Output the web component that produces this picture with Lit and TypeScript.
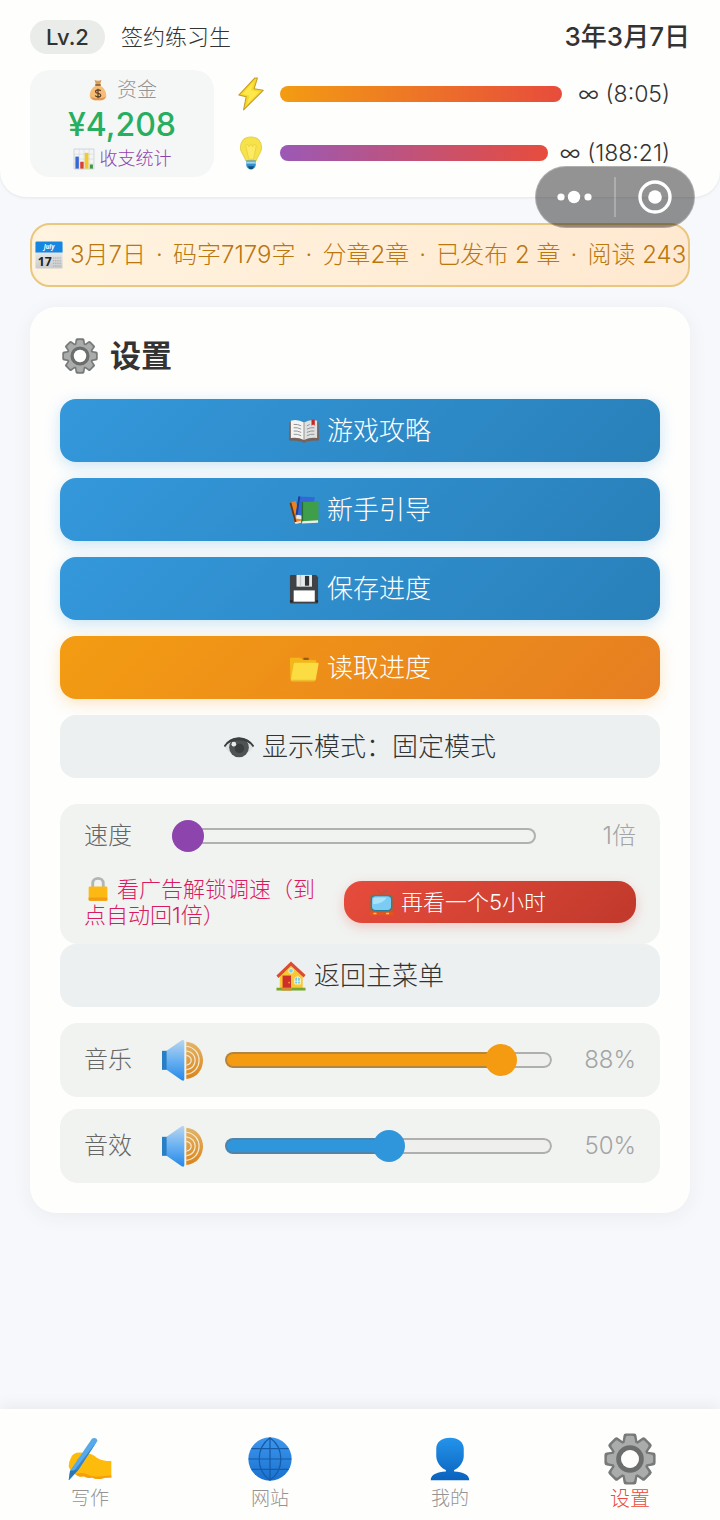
import { LitElement, html, svg, css } from "lit";
import { customElement, state } from "lit/decorators.js";

const gearBody = (r: number, w: number, top: number, fill: string) => svg`
  <g fill=${fill} transform="translate(32 32)">
    <circle r=${r}></circle>
    ${[0, 45, 90, 135, 180, 225, 270, 315].map(
      (a) => svg`<path transform="rotate(${a})" d="M${-w - 2} -16 L${-w} ${-top + 3} Q${-w} ${-top} ${-w + 3} ${-top} H${w - 3} Q${w} ${-top} ${w} ${-top + 3} L${w + 2} -16Z"></path>`
    )}
  </g>`;

const icons = {
  gear: svg`
    <mask id="gear-hole"><path fill="#fff" d="M0 0h64v64H0z"></path><circle cx="32" cy="32" r="11" fill="#000"></circle></mask>
    <g mask="url(#gear-hole)">
      ${gearBody(24, 8, 31.5, "#777a79")}
      ${gearBody(21, 5.5, 28.5, "#a9acaa")}
      <circle cx="32" cy="32" r="14" fill="none" stroke="#6b6e6d" stroke-width="6"></circle>
    </g>`,
  pouch: svg`
    <path d="M22 3q10 4 20 0l-4 14H26z" fill="#d9a05a"></path>
    <path d="M26 19C14 25 7 39 8 50c1 9 10 12 24 12s23-3 24-12c1-11-6-25-18-31z" fill="#f6bd78"></path>
    <path d="M12 51c4 7 36 7 42-1-1 9-8 12-22 12S13 60 12 51z" fill="#e3974d"></path>
    <path d="M24 15h16v5H24z" fill="#8a6238"></path>
    <path d="M40 35c-2-4-15-5-15 2 0 7 15 3 15 10 0 7-14 6-16 1M32 28v28" fill="none" stroke="#5c3d22" stroke-width="3.5"></path>`,
  chart: svg`
    <path d="M3 3h58v58H3z" fill="#f2f4f5" stroke="#c3c9cd" stroke-width="2"></path>
    <path d="M3 18h58M3 32h58M3 46h58M18 3v58M32 3v58M47 3v58" stroke="#cfd5d9" stroke-width="1.5"></path>
    <path d="M7 25h10v35H7z" fill="#3567d6"></path><path d="M21 40h10v20H21z" fill="#dc3f33"></path>
    <path d="M34 14h11v46H34z" fill="#f2c92f"></path><path d="M49 48h9v12h-9z" fill="#3a9b45"></path>`,
  bolt: svg`
    <path d="M39 2 9 34l14 3-5 25 37-37-17-3 6-20z" fill="#f5d92e" stroke="#c79b24" stroke-width="2" stroke-linejoin="round"></path>
    <path d="M37 9 16 32l13 3-4 16 22-23-15-3z" fill="#ffe84c"></path>`,
  bulb: svg`
    <path d="M32 2C19 2 12 11 12 22c0 10 8 15 10 24h20c2-9 10-14 10-24C52 11 45 2 32 2z" fill="#f6e34a" stroke="#e8cf55" stroke-width="2"></path>
    <path d="M22 18q5-5 6 2 4-8 7 0 2-7 7-2L37 44h-9z" fill="#fbea62" stroke="#e9cd42" stroke-width="1.5"></path>
    <path d="M23 46h18v8c0 4-4 9-9 9s-9-5-9-9z" fill="#2f91cf"></path>
    <path d="M23 48h18v4H23z" fill="#9ed7f3"></path><path d="M26 57h12l-3 5h-6z" fill="#174f73"></path>`,
  calendar: svg`
    <defs><linearGradient id="cal" x2="0" y2="1"><stop stop-color="#fafafa"></stop><stop offset="1" stop-color="#c9cbcc"></stop></linearGradient></defs>
    <path d="M1 4q0-3 3-3h56q3 0 3 3v56q0 3-3 3H4q-3 0-3-3z" fill="url(#cal)"></path>
    <path d="M1 4q0-3 3-3h56q3 0 3 3v22H1z" fill="#1786e0"></path>
    <text x="32" y="19" text-anchor="middle" font-family="Open Sans, sans-serif" font-size="14" font-weight="700" font-style="italic" fill="#fff">July</text>
    <text x="6" y="57" font-family="Open Sans, sans-serif" font-size="28" font-weight="700" fill="#222">17</text>
    <path d="M41 39h19M41 45h19M41 51h19M41 57h19" stroke="#a3a6a7" stroke-width="2.5" stroke-dasharray="3 2"></path>`,
  book: svg`
    <path d="M1 13q16-5 31 2 15-7 31-2l1 39q-17 0-28 3-4 4-8 0-11-3-28-3z" fill="#76625a"></path>
    <path d="M4 10q15-4 28 4v37q-12-6-28-4z" fill="#f3f3f1"></path><path d="M60 10q-15-4-28 4v37q12-6 28-4z" fill="#dfe0df"></path>
    <path d="M32 14v37" stroke="#8e8d8b" stroke-width="2"></path>
    <path d="M10 18q8-1 16 3M10 25q8-1 16 3M10 32q8-1 16 3M10 39q8-1 16 3M54 25q-8-1-16 3M54 32q-8-1-16 3M54 39q-8-1-16 3M44 18l-6 3" fill="none" stroke="#8b9093" stroke-width="2"></path>
    <path d="M48 8h7v13l-3.500-3-3.500 3z" fill="#c62828"></path>`,
  books: svg`
    <path d="m1 17 13-4 13 44-14 4z" fill="#ef8120"></path><path d="m1 17 4-1 12 45h-4z" fill="#5c3821"></path>
    <path d="m20 3 35 2-6 40-34-3z" fill="#3167d8"></path><path d="m20 3 4 0-6 42-4-2z" fill="#1c3f92"></path>
    <path d="m16 42 16 3v8l-17-3z" fill="#e7ece9"></path>
    <path d="m27 15 36-1v43l-36 2z" fill="#3e9e49"></path><path d="M27 15h3v44h-3z" fill="#226b33"></path>
    <path d="m28 56 34-2v5l-34 2z" fill="#e9efe9"></path><path d="m12 58 13-3 1 4-12 3z" fill="#f5e4cf"></path>`,
  floppy: svg`
    <path d="M4 2h54l4 5v54q0 2-2 2H4q-2 0-2-2V4q0-2 2-2z" fill="#3f4347"></path>
    <path d="M16 2h33v25H16z" fill="#e7e9ea"></path><path d="M34 4h9v21h-9z" fill="#303336"></path><path d="M23 2h3v25h-3z" fill="#c5c8c9"></path>
    <path d="M10 35h45v24H10z" fill="#fff"></path><path d="M2 56h6v4H2zM57 56h5v4h-5z" fill="#24272a"></path>`,
  folder: svg`
    <path d="M2 12q0-2 2-2h20l6 5h26q2 0 2 2v10L8 56H3z" fill="#f3b71c"></path>
    <path d="M31 10h11v5H31z" fill="#985d1a"></path>
    <path d="M10 24q0-3 3-3h48q3 0 2 3l-6 33q-1 3-4 3H6q-3 0-2-3z" fill="#fbdc42"></path><path d="M4 57q0 3 2 3h47q3 0 4-3z" fill="#edbd2d"></path>`,
  eye: svg`
    <path d="M1 31C15 5 48 5 63 31 49 57 15 57 1 31z" fill="#dfe3e3"></path>
    <path d="M1 31C15 8 48 8 63 31" fill="none" stroke="#3d4041" stroke-width="4"></path>
    <circle cx="32" cy="33" r="21" fill="#505354"></circle><circle cx="33" cy="35" r="10" fill="#3b3e3f"></circle><circle cx="21" cy="26" r="5" fill="#e9ecec"></circle>
    <path d="M2 30C14 6 49 5 62 30 48 14 16 14 2 30z" fill="#3d4041"></path>`,
  house: svg`
    <path d="M8 28 32 7l25 21v31H8z" fill="#f9c834"></path>
    <path d="m32 1 31 29-4 5L32 10 5 36l-4-5z" fill="#d94b35"></path>
    <path d="M14 31h18v27H14z" fill="#cf2f2b"></path><circle cx="28" cy="46" r="2" fill="#f4a52a"></circle>
    <circle cx="32" cy="21" r="5" fill="#79d0f3" stroke="#fff4c4" stroke-width="2"></circle>
    <path d="M40 49V37q6-7 12 0v12z" fill="#6fcbf1" stroke="#fff4c4" stroke-width="2"></path><path d="M46 34v15M39 43h14" stroke="#fff4c4" stroke-width="2"></path>
    <path d="M1 57h62v6H1z" fill="#78a72e"></path><path d="M12 57h22v6H12z" fill="#d38e2f"></path>`,
  tv: svg`
    <path d="m22 1 9 12L46 2" fill="none" stroke="#8c5f66" stroke-width="2"></path>
    <path d="M6 50h52l3 12H3z" fill="#e8521d"></path>
    <path d="M14 13h36q11 0 11 11v20q0 11-11 11H14Q3 55 3 44V24q0-11 11-11z" fill="#a9603f"></path>
    <path d="M18 16h28q10 0 10 10v15q0 10-10 10H18Q8 51 8 41V26q0-10 10-10z" fill="#7bccf2" stroke="#2d7c97" stroke-width="2.500"></path>
    <path d="M18 20h26q-6 14-32 16V26q0-6 6-6z" fill="#aae2fa"></path>
    <path d="M13 58h7M43 58h7" stroke="#fbd04f" stroke-width="4"></path>`,
  lock: svg`
    <path d="M19 30V18C19 2 45 2 45 18v12" fill="none" stroke="#b2b5b5" stroke-width="7"></path>
    <path d="M9 29q0-3 3-3h40q3 0 3 3v29q0 3-3 3H12q-3 0-3-3z" fill="#fdb913"></path><path d="M9 53h46v5q0 3-3 3H12q-3 0-3-3z" fill="#f19c12"></path>`,
  speaker: svg`
    <defs>
      <linearGradient id="cone" x2="0" y2="1"><stop stop-color="#b8d5ef"></stop><stop offset=".5" stop-color="#69b1f1"></stop><stop offset="1" stop-color="#2588e8"></stop></linearGradient>
      <linearGradient id="wave" x2="0" y2="1"><stop stop-color="#e2b568"></stop><stop offset="1" stop-color="#dc8419"></stop></linearGradient>
    </defs>
    <path d="M0 18h9v29H0z" fill="#287fc4"></path>
    <path d="M7 18 30 2q4-2 4 2v57q0 4-4 2L7 47z" fill="url(#cone)"></path>
    <path d="M37 4c34 3 34 54 0 57z" fill="url(#wave)"></path>
    <path d="M37 11c26 3 26 40 0 43M37 18c18 2 18 27 0 29M37 25c10 2 10 13 0 15" fill="none" stroke="#f6ead4" stroke-width="1.8"></path>`,
  writing: svg`
    <path d="M4 31Q7 21 22 23q12 0 20 7 7 5 21 5v24q-10 0-16 2-6 1-12-2-6 2-12-2-8 2-12-2Q2 48 1 43q0-7 3-12z" fill="#fdbb0b"></path>
    <path d="M11 53q10-2 17 1 8 5 19 3l16-1v3q-10 0-16 2-6 1-12-2-6 2-12-2-8 2-12-4z" fill="#f59f0c"></path>
    <path d="M9 44q7-9 14-8M13 34l8-4" fill="none" stroke="#e99a08" stroke-width="2"></path>
    <path d="M35 2q6-2 8 3L15 48 1 63 3 49z" fill="#57a9e8"></path>
    <path d="m43 5-28 43L1 63l4-9z" fill="#3785c6"></path><path d="m3 49 11-1L1 63z" fill="#2b75b5"></path>`,
  globe: svg`
    <defs><linearGradient id="globe" x2="0" y2="1"><stop stop-color="#3d97ee"></stop><stop offset="1" stop-color="#1971ce"></stop></linearGradient></defs>
    <circle cx="32" cy="32" r="31.5" fill="url(#globe)"></circle>
    <path d="M5 17h54M1 32h62M5 47h54M32 1v62M32 1c-21 15-21 47 0 62M32 1c21 15 21 47 0 62" fill="none" stroke="#165ba8" stroke-width="1.8"></path>`,
  person: svg`
    <defs><linearGradient id="person" x2="0" y2="1"><stop stop-color="#2494eb"></stop><stop offset="1" stop-color="#0a62bd"></stop></linearGradient></defs>
    <path d="M32 1C20 1 12 7 12 17v11c0 9 8 18 14 20v2C13 51 4 54 4 63h56c0-9-9-12-22-13v-2c6-2 14-11 14-20V17C52 7 44 1 32 1z" fill="url(#person)"></path>`,
};

type IconName = keyof typeof icons;
type ActionTone = "primary" | "warm" | "plain";

const icon = (name: IconName, cls = "icon") =>
  html`<svg class=${cls} viewBox="0 0 64 64" aria-hidden="true">${icons[name]}</svg>`;

@customElement("app-root")
export class AppRoot extends LitElement {
  @state() private speed = 1;
  @state() private music = 88;
  @state() private effects = 50;

  private actions: { icon: IconName; label: string; tone: ActionTone }[] = [
    { icon: "book", label: "游戏攻略", tone: "primary" },
    { icon: "books", label: "新手引导", tone: "primary" },
    { icon: "floppy", label: "保存进度", tone: "primary" },
    { icon: "folder", label: "读取进度", tone: "warm" },
    { icon: "eye", label: "显示模式：固定模式", tone: "plain" },
  ];

  private news = ["3月7日", "码字7179字", "分章2章", "已发布 2 章", "阅读 243"];

  private tabs: { icon: IconName; label: string }[] = [
    { icon: "writing", label: "写作" },
    { icon: "globe", label: "网站" },
    { icon: "person", label: "我的" },
    { icon: "gear", label: "设置" },
  ];

  static styles = css`
    :host {
      display: flex;
      flex-direction: column;
      position: relative;
      min-height: 100vh;
      background: #f7f8fb;
      color: #333;
      font-family: Inter, "Noto Sans CJK SC", sans-serif;
      font-weight: 300;
      font-size: 24px;
      line-height: 32px;
    }
    *, *::before { box-sizing: border-box; }
    h1, p, ul { margin: 0; padding: 0; }
    button, input { font: inherit; color: inherit; margin: 0; }
    button { border: 0; cursor: pointer; }
    svg { display: block; flex: none; }

    .header {
      display: grid;
      gap: 16px;
      padding: 20px 30px;
      background: #fefefd;
      border-radius: 0 0 26px 26px;
      box-shadow: 0 1px 3px rgba(0, 0, 0, 0.08);
    }
    .identity { display: flex; align-items: center; gap: 16px; height: 34px; }
    .level { padding: 0 16px; border-radius: 17px; background: #eaecea; font-size: 22px; font-weight: 500; line-height: 34px; }
    .rank { font-size: 22px; }
    .date { margin-left: auto; font-size: 26px; font-weight: 500; }
    .stats { display: flex; gap: 20px; }
    .funds { flex: none; display: grid; justify-items: center; width: 184px; padding: 7px 0 5px; border-radius: 20px; background: #f5f7f6; }
    .funds .icon { width: 22px; height: 22px; }
    .funds-label { display: flex; align-items: center; gap: 8px; font-size: 20px; line-height: 26px; color: #959595; }
    .money { font-size: 32px; font-weight: 500; line-height: 43px; color: #27ae60; }
    .ledger { display: flex; align-items: center; gap: 5px; padding: 0; background: none; font-size: 18px; line-height: 26px; color: #8e44ad; }
    .meters { flex: 1; display: grid; align-content: center; gap: 25px; padding-right: 20px; }
    .meter { display: flex; align-items: center; gap: 12px; height: 34px; }
    .meter .icon { width: 34px; height: 34px; }
    .bar { flex: 1; height: 16px; border-radius: 8px; background: linear-gradient(90deg, #f39c12, #e74c3c); }
    .bar.idea { background: linear-gradient(90deg, #9b59b6, #e74c3c); }
    .remaining { min-width: 96px; font-size: 23px; text-align: right; }

    .capsule { position: absolute; top: 166px; right: 25px; display: flex; align-items: center; width: 160px; height: 62px; border: 1px solid rgba(255, 255, 255, 0.25); border-radius: 31px; background: rgba(0, 0, 0, 0.42); }
    .capsule button { flex: 1; display: grid; place-items: center; padding: 0; background: none; }
    .capsule button + button { border-left: 2px solid rgba(255, 255, 255, 0.25); height: 40px; }

    .main { display: grid; gap: 20px; padding: 26px 30px; }
    .ticker { display: flex; align-items: center; gap: 7px; height: 64px; padding: 0 3px; overflow: hidden; white-space: nowrap; border: 2px solid #eac77e; border-radius: 20px; background: linear-gradient(135deg, #fff4e0, #ffe8d0); color: #b9770e; }
    .ticker .icon { width: 28px; height: 30px; }
    .ticker ul { display: flex; list-style: none; }
    .ticker li + li::before { content: "·"; display: inline-block; width: 27px; text-align: center; }

    .card { display: grid; padding: 30px; border-radius: 26px; background: #fefefd; box-shadow: 0 4px 20px rgba(40, 50, 90, 0.06); }
    .title { display: flex; align-items: center; gap: 12px; height: 38px; padding-left: 2px; margin-bottom: 24px; font-size: 31px; font-weight: 700; }
    .title .icon { width: 36px; height: 36px; }
    .actions { display: grid; gap: 16px; margin-bottom: 26px; }
    .action { display: flex; align-items: center; justify-content: center; gap: 8px; width: 100%; height: 63px; padding: 0; border-radius: 16px; font-size: 26px; }
    .action .icon { width: 30px; height: 30px; }
    .primary { color: #fff; background: linear-gradient(135deg, #3498db, #2980b9); box-shadow: 0 4px 15px rgba(52, 152, 219, 0.25); }
    .warm { color: #fff; background: linear-gradient(135deg, #f39c12, #e67e22); box-shadow: 0 4px 15px rgba(243, 156, 18, 0.25); }
    .plain { color: #333; background: #ecf0f0; }

    .panel { display: grid; gap: 24px; padding: 16px 24px; border-radius: 18px; background: #f1f3f1; }
    .setting { display: flex; align-items: center; color: #666; }
    .setting label { flex: none; width: 48px; }
    .setting output { flex: none; width: 84px; text-align: right; color: #a4a4a4; }
    .setting .icon { width: 42px; height: 42px; margin: 0 21px 0 30px; }
    .setting.speed input { margin-left: 40px; }
    .setting.speed output { width: 100px; }
    .unlock { display: flex; align-items: center; gap: 16px; font-size: 22px; line-height: 26px; }
    .hint { flex: 1; color: #d81b60; }
    .hint .icon { display: inline-block; width: 28px; height: 26px; margin-right: 5px; vertical-align: -5px; }
    .watch { flex: none; display: flex; align-items: center; gap: 6px; width: 292px; height: 42px; padding: 0 24px; border-radius: 18px; color: #fff; background: linear-gradient(135deg, #e74c3c, #c0392b); box-shadow: 0 4px 12px rgba(231, 76, 60, 0.25); }
    .watch .icon { width: 27px; height: 27px; }
    .volumes { display: grid; gap: 12px; margin-top: 16px; }

    input[type="range"] {
      --fill: transparent;
      --tint: #8e44ad;
      appearance: none;
      flex: 1;
      min-width: 0;
      height: 16px;
      border-radius: 8px;
      background: linear-gradient(var(--fill), var(--fill)) 0 0 / var(--value) 100% no-repeat, #efefed;
      box-shadow: inset 0 0 0 2px rgba(112, 112, 112, 0.5);
    }
    input.orange { --fill: #f59b12; --tint: #f59b12; }
    input.blue { --fill: #3096dc; --tint: #3096dc; }
    input[type="range"]::-webkit-slider-runnable-track { height: 16px; }
    input[type="range"]::-webkit-slider-thumb { appearance: none; width: 32px; height: 32px; margin-top: -8px; border-radius: 50%; background: var(--tint); }

    .tabs { position: sticky; bottom: 0; display: flex; margin-top: auto; padding: 28px 0 9px; background: #fefefd; box-shadow: 0 -2px 16px rgba(0, 0, 0, 0.07); }
    .tab { flex: 1; display: flex; flex-direction: column; align-items: center; gap: 6px; color: #949494; font-size: 19px; line-height: 24px; text-decoration: none; }
    .tab .icon { width: 44px; height: 44px; }
    .tab.current { color: #e74c3c; font-size: 20px; }
    .tab.current .icon { width: 52px; height: 52px; margin: -4px; }
  `;

  private volume(id: string, label: string, tint: string, value: number, change: (v: number) => void) {
    return html`<div class="panel">
      <div class="setting">
        <label for=${id}>${label}</label>
        ${icon("speaker")}
        <input id=${id} class=${tint} type="range" min="0" max="100" .value=${String(value)} style="--value:${value}%"
          @input=${(e: Event) => change(Number((e.target as HTMLInputElement).value))} />
        <output for=${id}>${value}%</output>
      </div>
    </div>`;
  }

  render() {
    return html`
      <header class="header">
        <div class="identity">
          <span class="level">Lv.2</span>
          <span class="rank">签约练习生</span>
          <span class="date">3年3月7日</span>
        </div>
        <div class="stats">
          <div class="funds">
            <span class="funds-label">${icon("pouch")}资金</span>
            <span class="money">¥4,208</span>
            <button class="ledger">${icon("chart")}收支统计</button>
          </div>
          <div class="meters">
            <div class="meter">${icon("bolt")}<div class="bar"></div><span class="remaining">∞ (8:05)</span></div>
            <div class="meter">${icon("bulb")}<div class="bar idea"></div><span class="remaining">∞ (188:21)</span></div>
          </div>
        </div>
      </header>

      <div class="capsule">
        <button aria-label="更多">
          <svg width="36" height="14" viewBox="0 0 36 14"><g fill="#fff"><circle cx="4" cy="7" r="3.6"></circle><circle cx="17" cy="7" r="6.2"></circle><circle cx="31" cy="7" r="3.6"></circle></g></svg>
        </button>
        <button aria-label="关闭">
          <svg width="34" height="34" viewBox="0 0 34 34"><circle cx="17" cy="17" r="15" fill="none" stroke="#fff" stroke-width="3.4"></circle><circle cx="17" cy="17" r="6.8" fill="#fff"></circle></svg>
        </button>
      </div>

      <main class="main">
        <div class="ticker">${icon("calendar")}<ul>${this.news.map((n) => html`<li>${n}</li>`)}</ul></div>

        <section class="card">
          <h1 class="title">${icon("gear")}设置</h1>
          <div class="actions">
            ${this.actions.map((a) => html`<button class="action ${a.tone}">${icon(a.icon)}${a.label}</button>`)}
          </div>
          <div class="panel">
            <div class="setting speed">
              <label for="speed">速度</label>
              <input id="speed" type="range" min="1" max="5" .value=${String(this.speed)}
                @input=${(e: Event) => (this.speed = Number((e.target as HTMLInputElement).value))} />
              <output for="speed">${this.speed}倍</output>
            </div>
            <div class="unlock">
              <p class="hint">${icon("lock")}看广告解锁调速（到点自动回1倍）</p>
              <button class="watch">${icon("tv")}再看一个5小时</button>
            </div>
          </div>
          <button class="action plain">${icon("house")}返回主菜单</button>
          <div class="volumes">
            ${this.volume("music", "音乐", "orange", this.music, (v) => (this.music = v))}
            ${this.volume("effects", "音效", "blue", this.effects, (v) => (this.effects = v))}
          </div>
        </section>
      </main>

      <nav class="tabs">
        ${this.tabs.map(
          (t) => html`<a class="tab ${t.icon === "gear" ? "current" : ""}" href="#${t.icon}">${icon(t.icon)}${t.label}</a>`
        )}
      </nav>
    `;
  }
}
